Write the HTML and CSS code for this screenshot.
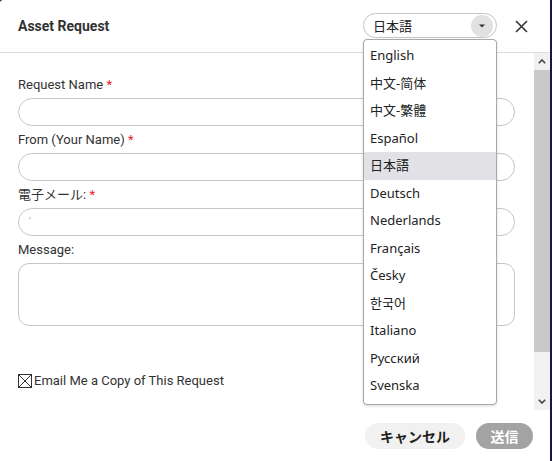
FILE: index.html
```html
<!DOCTYPE html>
<html lang="ja">
<head>
<meta charset="utf-8">
<title>Asset Request</title>
<link rel="stylesheet" href="styles.css">
</head>
<body>
<div class="dialog">
  <header class="head">
    <h1 class="title">Asset Request</h1>
    <div class="lang">
      <div class="lang-box">
        <span class="lang-value">日本語</span>
        <span class="lang-btn"><svg width="8" height="4" viewBox="0 0 8 4"><path d="M1 0.5h6L4 3.5z" fill="#333"/></svg></span>
      </div>
      <ul class="lang-list">
        <li>English</li>
        <li>中文-简体</li>
        <li>中文-繁體</li>
        <li>Español</li>
        <li class="sel">日本語</li>
        <li>Deutsch</li>
        <li>Nederlands</li>
        <li>Français</li>
        <li>Česky</li>
        <li>한국어</li>
        <li>Italiano</li>
        <li>Русский</li>
        <li>Svenska</li>
      </ul>
    </div>
    <button class="close" aria-label="close"><svg width="13" height="13" viewBox="0 0 13 13"><path d="M1 1L12 12M12 1L1 12" stroke="#333" stroke-width="1.6" fill="none"/></svg></button>
  </header>
  <div class="body">
    <div class="form">
      <div class="field">
        <label class="label">Request Name <span class="req">*</span></label>
        <div class="input"></div>
      </div>
      <div class="field">
        <label class="label">From (Your Name) <span class="req">*</span></label>
        <div class="input"></div>
      </div>
      <div class="field">
        <label class="label">電子メール: <span class="req">*</span></label>
        <div class="input"><span class="caret">'</span></div>
      </div>
      <div class="field">
        <label class="label">Message:</label>
        <div class="textarea"></div>
      </div>
      <div class="check">
        <svg class="box" width="14" height="14" viewBox="0 0 14 14"><rect x="0.5" y="0.5" width="13" height="13" fill="none" stroke="#333"/><path d="M1 1L13 13M13 1L1 13" stroke="#333" stroke-width="1"/></svg>
        <span>Email Me a Copy of This Request</span>
      </div>
    </div>
    <div class="scrollbar">
      <div class="sb-btn"><svg width="8" height="5" viewBox="0 0 8 5"><path d="M0.8 4.2L4 1L7.2 4.2" stroke="#444" stroke-width="1.6" fill="none"/></svg></div>
      <div class="sb-thumb"></div>
      <div class="sb-track"></div>
      <div class="sb-btn"><svg width="8" height="5" viewBox="0 0 8 5"><path d="M0.8 0.8L4 4L7.2 0.8" stroke="#444" stroke-width="1.6" fill="none"/></svg></div>
    </div>
  </div>
  <footer class="foot">
    <button class="btn cancel">キャンセル</button>
    <button class="btn send">送信</button>
  </footer>
</div>
</body>
</html>
```
FILE: styles.css
```css
html, body {
  margin: 0;
  padding: 0;
}
body {
  background: #16193a;
  width: 552px;
  height: 461px;
  overflow: hidden;
  font-family: Roboto, "Noto Sans CJK JP", sans-serif;
  color: #333;
}
.dialog {
  width: 550px;
  height: 461px;
  background: #fff;
  border-top-left-radius: 3px;
  display: flex;
  flex-direction: column;
}
.head {
  height: 52px;
  border-bottom: 1px solid #dcdcdc;
  display: flex;
  align-items: center;
  padding: 0 22px 0 18px;
  position: relative;
  z-index: 2;
}
.title {
  flex: 1;
  margin: 0;
  font-size: 14px;
  font-weight: 700;
  color: #333;
}
.lang {
  position: relative;
  width: 134px;
  margin-right: 18px;
  margin-top: -1px;
}
.lang-box {
  height: 25px;
  box-sizing: border-box;
  border: 1px solid #c4c4c4;
  border-radius: 13px;
  display: flex;
  align-items: center;
  padding: 0 3px 0 9px;
}
.lang-value {
  flex: 1;
  font-family: "Noto Sans CJK JP", sans-serif;
  font-size: 13px;
  color: #222;
}
.lang-btn {
  width: 22px;
  height: 22px;
  border-radius: 50%;
  background: #e1e1e1;
  display: flex;
  align-items: center;
  justify-content: center;
}
.lang-list {
  position: absolute;
  top: 26px;
  left: 0;
  width: 132px;
  margin: 0;
  padding: 2px 0 4px;
  list-style: none;
  background: #fff;
  border: 1px solid #a8a8a8;
  border-radius: 4px;
  box-shadow: 0 1px 3px rgba(0,0,0,0.15);
  font-family: "Noto Sans", "Noto Sans CJK JP", "Noto Sans CJK KR", sans-serif;
  font-size: 13px;
  color: #222;
}
.lang-list li {
  height: 27.5px;
  line-height: 27.5px;
  padding-left: 6px;
}
.lang-list li.sel {
  background: #e1e1e6;
}
.close {
  width: 13px;
  height: 13px;
  padding: 0;
  border: 0;
  background: none;
  display: flex;
}
.body {
  flex: 1;
  display: flex;
  min-height: 0;
}
.form {
  flex: 1;
  padding: 24px 19px 0 18px;
}
.field {
  margin-bottom: 6px;
}
.label {
  display: block;
  font-size: 13px;
  line-height: 16px;
  height: 16px;
  margin-bottom: 5px;
  color: #333;
}
.req {
  color: #e8232a;
}
.input {
  height: 28px;
  box-sizing: border-box;
  border: 1px solid #c6c6c6;
  border-radius: 14px;
  font-size: 10px;
  color: #999;
  padding-left: 10px;
  line-height: 26px;
}
.textarea {
  height: 63px;
  box-sizing: border-box;
  border: 1px solid #c6c6c6;
  border-radius: 11px;
}
.check {
  display: flex;
  align-items: center;
  gap: 2px;
  margin-top: 47px;
  font-size: 13px;
  color: #333;
}
.box {
  display: block;
}
.scrollbar {
  width: 16px;
  display: flex;
  flex-direction: column;
  background: #f1f1f1;
}
.sb-btn {
  height: 17px;
  display: flex;
  align-items: center;
  justify-content: center;
}
.sb-thumb {
  height: 282px;
  background: #c9c9c9;
}
.sb-track {
  flex: 1;
}
.foot {
  height: 51px;
  flex: none;
  display: flex;
  align-items: center;
  justify-content: flex-end;
  gap: 11px;
  padding-right: 17px;
}
.btn {
  height: 26px;
  border: 0;
  border-radius: 13px;
  font-family: "Noto Sans CJK JP", sans-serif;
  font-weight: 700;
  font-size: 14px;
  padding: 0;
}
.cancel {
  width: 100px;
  background: #f1f1f1;
  color: #222;
}
.send {
  width: 57px;
  background: #a3a3a3;
  color: #fff;
}
```
